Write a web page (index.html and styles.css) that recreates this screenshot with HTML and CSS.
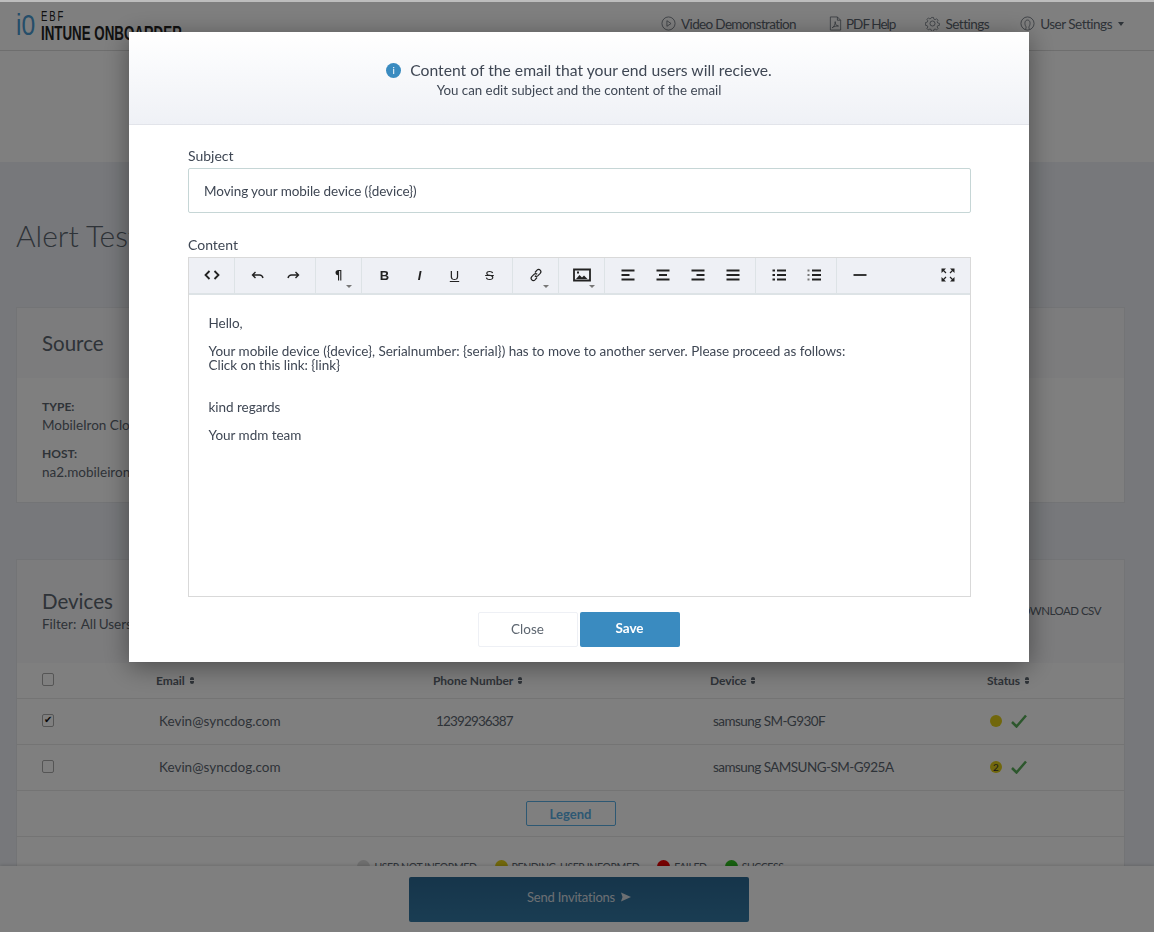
FILE: index.html
```html
<!DOCTYPE html>
<html lang="en">
<head>
<meta charset="utf-8">
<title>Intune Onboarder</title>
<link rel="stylesheet" href="styles.css">
</head>
<body>
<div class="strip"></div>
<header class="nav">
  <a class="logo">
    <span class="logo-mark">i0</span>
    <span class="logo-text"><span class="logo-small">EBF</span><span class="logo-big">INTUNE ONBOARDER</span></span>
  </a>
  <nav class="nav-links">
    <a class="nav-link l1"><svg class="nav-ico" viewBox="0 0 16 16"><circle cx="8" cy="8" r="7"/><path d="M6.3 5l4.4 3-4.4 3z"/></svg>Video Demonstration</a>
    <a class="nav-link l2"><svg class="nav-ico" viewBox="0 0 16 16"><path d="M2.500 1h7.500l3.500 3.500v10.500h-11zM10 1v3.500h3.500"/><path d="M4.500 12.500c2-1 3.500-4 3.200-6.500-.6 2 1 4.500 3.500 4.700-2-.2-5 .4-6.700 1.800z"/></svg>PDF Help</a>
    <a class="nav-link l3"><svg class="nav-ico" viewBox="0 0 16 16"><circle cx="8" cy="8" r="2.700"/><path d="M6.800 .8h2.400l.4 2 1.500.7 1.800-1.100 1.700 1.700-1.100 1.800.7 1.500 2 .4v2.400l-2 .4-.7 1.500 1.100 1.800-1.700 1.700-1.800-1.100-1.500.7-.4 2H6.800l-.4-2-1.500-.7-1.800 1.100-1.700-1.700 1.100-1.800-.7-1.500-2-.4V6.800l2-.4.7-1.500-1.100-1.800 1.700-1.700 1.800 1.100 1.500-.7z" transform="translate(.8 .8) scale(.9)"/></svg>Settings</a>
    <a class="nav-link l4"><svg class="nav-ico" viewBox="0 0 16 16"><circle cx="8" cy="8" r="7"/><path d="M5.500 14.300c1-1 1.200-2 .8-3-1.800-2.800-1.300-7 1.700-7s3.500 4.200 1.700 7c-.4 1-.2 2 .8 3"/></svg>User Settings<span class="nav-caret"></span></a>
  </nav>
</header>
<div class="hero"></div>
<main class="main">
  <h1 class="page-title">Alert Test</h1>
  <section class="card source">
    <div class="card-head"><h2 class="card-title">Source</h2></div>
    <div class="card-body">
      <div class="field-label">TYPE:</div>
      <div class="field-value">MobileIron Cloud</div>
      <div class="field-label second">HOST:</div>
      <div class="field-value">na2.mobileiron.com</div>
    </div>
  </section>
  <section class="card devices">
    <div class="card-head devices-head">
      <div class="devices-title">
        <h2 class="card-title">Devices</h2>
        <div class="filter">Filter:&nbsp; All Users</div>
      </div>
      <a class="csv">DOWNLOAD CSV</a>
    </div>
    <div class="row thead">
      <div><input type="checkbox" class="check"></div>
      <div class="th">Email <span class="sort"></span></div>
      <div class="th">Phone Number <span class="sort"></span></div>
      <div class="th">Device <span class="sort"></span></div>
      <div class="th">Status <span class="sort"></span></div>
    </div>
    <div class="row tr">
      <div><input type="checkbox" class="check" checked></div>
      <div class="td">Kevin@syncdog.com</div>
      <div class="td num">12392936387</div>
      <div class="td dev">samsung SM-G930F</div>
      <div class="td status"><span class="dot yellow"></span><svg class="tick" viewBox="0 0 16 14"><path d="M1 8l4.500 4.500L15 1.500"/></svg></div>
    </div>
    <div class="row tr">
      <div><input type="checkbox" class="check"></div>
      <div class="td">Kevin@syncdog.com</div>
      <div class="td num"></div>
      <div class="td dev">samsung SAMSUNG-SM-G925A</div>
      <div class="td status"><span class="dot yellow">2</span><svg class="tick" viewBox="0 0 16 14"><path d="M1 8l4.500 4.500L15 1.500"/></svg></div>
    </div>
    <div class="legend-btn-row"><button class="legend-btn">Legend</button></div>
    <div class="legend">
      <span class="legend-item"><span class="ldot grey"></span>USER NOT INFORMED</span>
      <span class="legend-item"><span class="ldot yellow"></span>PENDING, USER INFORMED</span>
      <span class="legend-item"><span class="ldot red"></span>FAILED</span>
      <span class="legend-item"><span class="ldot green"></span>SUCCESS</span>
    </div>
  </section>
</main>
<footer class="bottom">
  <button class="send">Send Invitations <svg class="send-ico" viewBox="0 0 10 10"><path d="M0 .5l10 4.500-10 4.500 1.500-4.500z"/></svg></button>
</footer>
<div class="overlay">
  <div class="modal">
    <div class="modal-head">
      <div class="modal-title"><span class="info">i</span>Content of the email that your end users will recieve.</div>
      <div class="modal-sub">You can edit subject and the content of the email</div>
    </div>
    <div class="modal-body">
      <label class="label">Subject</label>
      <div class="input">Moving your mobile device ({device})</div>
      <label class="label content-label">Content</label>
      <div class="editor">
        <div class="toolbar">
          <div class="group"><span class="tb"><svg viewBox="0 0 16 16"><path class="s" d="M5.500 4L1.500 8l4 4M10.500 4l4 4-4 4"/></svg></span></div>
          <div class="group"><span class="tb"><svg viewBox="0 0 16 16"><path class="u" d="M5.500 5L2.500 8l3 3M2.500 8h7c2 0 3 1 3.500 3"/></svg></span><span class="tb"><svg viewBox="0 0 16 16"><path class="u" d="M10.500 5l3 3-3 3M13.500 8h-7c-2 0-3 1-3.500 3"/></svg></span></div>
          <div class="group"><span class="tb glyph para">¶<span class="tb-caret"></span></span></div>
          <div class="group"><span class="tb glyph">B</span><span class="tb glyph it">I</span><span class="tb glyph un">U</span><span class="tb glyph st">S</span></div>
          <div class="group"><span class="tb"><svg viewBox="0 0 16 16"><path class="t" d="M7 5.500l2-2.300c1-1 2.300-1 3.200-.1s.9 2.200 0 3.200l-2.200 2.300c-1 1-2.300 1-3.200.2M9 10.500l-2 2.300c-1 1-2.300 1-3.200.1s-.9-2.200 0-3.200l2.200-2.300c1-1 2.300-1 3.200-.2"/></svg><span class="tb-caret"></span></span></div>
          <div class="group"><span class="tb"><svg class="wide" viewBox="0 0 18 14"><path class="s" d="M1 1.500h16v11H1z"/><path class="f" d="M3 11l3.500-4 2.500 2.500 2-2 3.500 3.500zM4 3.500h2v2H4z"/></svg><span class="tb-caret"></span></span></div>
          <div class="group">
            <span class="tb"><svg viewBox="0 0 16 16"><path class="s" d="M1.500 3.500h13M1.500 8h8M1.500 12.500h13"/></svg></span>
            <span class="tb"><svg viewBox="0 0 16 16"><path class="s" d="M1.500 3.500h13M4 8h8M1.500 12.500h13"/></svg></span>
            <span class="tb"><svg viewBox="0 0 16 16"><path class="s" d="M1.500 3.500h13M6.500 8h8M1.500 12.500h13"/></svg></span>
            <span class="tb"><svg viewBox="0 0 16 16"><path class="s" d="M1.500 3.500h13M1.500 8h13M1.500 12.500h13"/></svg></span>
          </div>
          <div class="group">
            <span class="tb"><svg viewBox="0 0 16 16"><path class="s" d="M1.500 3.500h2.500M6 3.500h9M1.500 8h2.500M6 8h9M1.500 12.500h2.500M6 12.500h9"/></svg></span>
            <span class="tb"><svg viewBox="0 0 16 16"><path class="s" d="M6 3.500h9M6 8h9M6 12.500h9"/><path class="thin" d="M1.500 3.500h2.500M1.500 8h2.500M1.500 12.500h2.500"/></svg></span>
          </div>
          <div class="group last"><span class="tb"><svg viewBox="0 0 16 16"><path class="s" d="M1.500 8h13"/></svg></span></div>
          <div class="group full"><span class="tb"><svg viewBox="0 0 16 16"><path class="f" d="M1.500 1.500h4.500L1.500 6zM14.500 1.500V6L10 1.500zM1.500 14.500V10L6 14.500zM14.500 14.500H10L14.500 10z"/><path class="t" d="M3 3l3 3M13 3l-3 3M3 13l3-3M13 13l-3-3"/></svg></span></div>
        </div>
        <div class="editor-body">
          <p>Hello,</p>
          <p>Your mobile device ({device}, Serialnumber: {serial}) has to move to another server. Please proceed as follows:<br>Click on this link: {link}<br><br></p>
          <p>kind regards</p>
          <p>Your mdm team</p>
        </div>
      </div>
      <div class="actions">
        <button class="btn close">Close</button>
        <button class="btn save">Save</button>
      </div>
    </div>
  </div>
</div>
</body>
</html>
```
FILE: styles.css
```css
* { box-sizing: border-box; }
html, body { height: 100%; }
body {
  margin: 0;
  height: 932px;
  overflow: hidden;
  background: #eef1f6;
  color: #5d6670;
  font-family: "Lato", "Noto Sans", sans-serif;
  font-size: 13.500px;
}
.strip { height: 2px; background: #bdbdbd; }
.nav {
  height: 49px;
  background: #fff;
  border-bottom: 1px solid #dcdcdc;
  display: flex;
  align-items: center;
  justify-content: space-between;
  padding: 0 30px 0 16px;
}
.logo { display: flex; align-items: center; gap: 2px; margin-bottom: 2px; }
.logo-mark { font: 400 30px/30px "Liberation Sans", sans-serif; color: #4a9cd4; transform: scaleX(.82); transform-origin: left center; }
.logo-text { display: flex; flex-direction: column; color: #222; font-family: "Liberation Sans", sans-serif; transform: scaleX(.635); transform-origin: left center; }
.logo-small { font-size: 15px; line-height: 15px; letter-spacing: 3px; }
.logo-big { font-size: 21px; line-height: 20px; font-weight: 700; white-space: nowrap; }
.nav-links { display: flex; align-items: center; margin-bottom: 5px; letter-spacing: -.5px; }
.nav-link { display: flex; align-items: center; color: #5d6670; }
.l1 { margin-right: 32px; letter-spacing: -.65px; }
.l2 { margin-right: 30px; letter-spacing: -.95px; }
.l2 .nav-ico { margin-right: 3px; }
.l3 { margin-right: 31px; }
.nav-ico { width: 15px; height: 15px; margin-right: 5px; fill: none; stroke: #5d6670; stroke-width: .8; }
.nav-caret { margin-left: 6px; border: 3.500px solid transparent; border-top: 4px solid #5d6670; border-bottom: 0; }
.hero { height: 111px; background: #fff; }
.main { padding: 0 29px 0 16px; }
.page-title { margin: 53px 0 0; height: 92px; font-size: 30px; font-weight: 300; line-height: 40px; color: #5d6670; }
.card { background: #fff; border: 1px solid #e6e8ec; }
.source { height: 196px; margin-bottom: 56px; }
.card-head { background: #f8f8fa; padding: 0 25px; height: 70px; display: flex; align-items: center; }
.card-title { margin: 0; font-size: 20.500px; font-weight: 400; line-height: 26px; color: #5d6670; }
.card-body { padding: 20px 25px; line-height: 18px; }
.field-label { font-size: 12px; font-weight: 700; }
.second { margin-top: 11px; }
.devices-head { height: 103px; justify-content: space-between; padding-right: 23px; }
.devices-title { margin-bottom: 2px; }
.filter { line-height: 20px; word-spacing: -1px; }
.csv { font-size: 11.500px; letter-spacing: -.5px; color: #5d6670; margin-bottom: 3px; }
.row { display: grid; grid-template-columns: 114px 277px 277px 277px 1fr; border-bottom: 1px solid #e8e8e8; align-items: center; padding-left: 25px; }
.thead { height: 36px; }
.thead .check { margin-bottom: 2px; }
.tr { height: 46px; padding-bottom: 2px; }
.check {
  appearance: none;
  margin: 0;
  display: block;
  width: 12px;
  height: 13px;
  background: #fff;
  border: 1px solid #aaa;
  border-radius: 2px;
  position: relative;
}
.check:checked::after { content: "✔"; position: absolute; left: 1px; top: -2px; font: 10px/14px "DejaVu Sans", sans-serif; color: #111; }
.th { font-size: 12px; font-weight: 700; letter-spacing: -.05px; display: flex; align-items: center; gap: 5px; }
.sort { width: 4px; height: 7px; background: linear-gradient(#5d6670 40%, transparent 40%, transparent 60%, #5d6670 60%); border-radius: 2px; }
.td { padding-left: 3px; }
.num { letter-spacing: -.85px; }
.dev { letter-spacing: -.55px; }
.status { display: flex; align-items: center; gap: 9px; }
.dot { width: 12px; height: 12px; border-radius: 50%; font-size: 10px; line-height: 12px; text-align: center; color: #333; }
.yellow { background: #e2cf18; }
.tick { width: 16px; height: 14px; fill: none; stroke: #5aae5a; stroke-width: 2.500; }
.legend-btn-row { height: 46px; display: flex; align-items: center; justify-content: center; border-bottom: 1px solid #e8e8e8; }
.legend-btn { width: 90px; height: 25px; border: 1px solid #5bb0e6; border-radius: 2px; background: #fff; color: #5bb0e6; font: 700 13px "Lato", sans-serif; padding: 0; }
.legend { display: flex; justify-content: center; gap: 18px; padding-top: 23px; font-size: 10.500px; letter-spacing: -.4px; }
.legend-item { display: flex; align-items: center; gap: 4px; }
.ldot { width: 13px; height: 13px; border-radius: 50%; }
.grey { background: #ddd; }
.red { background: #ee0000; }
.green { background: #30c020; }
.bottom {
  position: fixed;
  left: 0; right: 0; bottom: 0;
  height: 66px;
  background: #fff;
  box-shadow: 0 -1px 3px rgba(0,0,0,.15);
  display: flex;
  justify-content: center;
  padding-top: 11px;
  padding-left: 4px;
}
.send {
  width: 340px; height: 45px;
  border: 0; border-radius: 2px;
  background: linear-gradient(#2c6a95, #347aa6);
  color: #d8dfe5;
  font: 400 13px "Lato", sans-serif;
  letter-spacing: -.2px;
  display: flex; align-items: center; justify-content: center; gap: 6px;
  padding: 0 0 5px;
}
.send-ico { width: 10px; height: 10px; fill: #d8dfe5; }
.overlay { position: fixed; left: 0; right: 0; top: 2px; bottom: 0; background: rgba(0,0,0,.5); padding: 30px 0 0 129px; }
.modal { width: 900px; height: 630px; background: #fff; box-shadow: 0 5px 25px rgba(0,0,0,.4); color: #3f4754; }
.modal-head {
  height: 93px;
  background: linear-gradient(#fff, #eff1f6);
  border-bottom: 1px solid #e2e4ea;
  display: flex; flex-direction: column; align-items: center;
  padding: 28px 0 0;
}
.modal-title { font-size: 15.700px; line-height: 20px; display: flex; align-items: center; }
.info { width: 15px; height: 15px; border-radius: 50%; background: #3a8bc0; color: #fff; font-size: 10px; line-height: 15px; text-align: center; margin-right: 9px; }
.modal-sub { font-size: 13.300px; line-height: 20px; }
.modal-body { padding: 21px 58px 0 59px; }
.label { display: block; line-height: 20px; margin-bottom: 2px; font-size: 14px; color: #3f4754; }
.input { height: 45px; border: 1px solid #c6d6d6; border-radius: 2px; padding: 0 15px; line-height: 44px; letter-spacing: -.08px; margin-bottom: 22px; }
.editor { height: 340px; border: 1px solid #d9d9d9; display: flex; flex-direction: column; }
.toolbar { height: 37px; flex: none; background: #eef0f5; border-bottom: 2px solid #dde3e6; display: flex; }
.group { display: flex; padding: 0 5px; border-right: 1px solid #dde3e6; flex: none; }
.group.last { border-right: 0; }
.group.full { margin-left: auto; border-right: 0; }
.tb { width: 35px; height: 34px; position: relative; display: flex; align-items: center; justify-content: center; color: #222; }
.tb svg { width: 16px; height: 16px; display: block; }
.tb svg.wide { width: 18px; height: 14px; }
.glyph { font: 700 13px "Liberation Sans", sans-serif; }
.para { font-family: "DejaVu Sans", sans-serif; font-size: 12px; }
.it { font-style: italic; }
.un { text-decoration: underline; font-weight: 400; }
.st { text-decoration: line-through; font-weight: 400; }
.s { fill: none; stroke: #222; stroke-width: 1.800; }
.u { fill: none; stroke: #222; stroke-width: 1.400; }
.t { fill: none; stroke: #222; stroke-width: 1.200; }
.thin { fill: none; stroke: #777; stroke-width: 1.800; stroke-dasharray: 2 1; }
.f { fill: #222; }
.tb-caret { position: absolute; right: 4px; bottom: 4px; border: 3px solid transparent; border-top: 3px solid #777; border-bottom: 0; }
.editor-body { flex: 1; padding: 21px 20px 0 19.500px; line-height: 14px; letter-spacing: -.03px; }
.editor-body p { margin: 0 0 14px; }
.actions { display: flex; justify-content: center; gap: 2px; padding-top: 15px; padding-right: 2px; }
.btn { width: 100px; height: 35px; border-radius: 2px; font: 400 13.500px "Lato", sans-serif; }
.close { background: #fff; border: 1px solid #eef0f5; color: #5d6670; padding: 0 0 2px; }
.save { background: #3a8bc0; border: 0; color: #fff; font-weight: 700; padding: 0 0 4px; }
```
